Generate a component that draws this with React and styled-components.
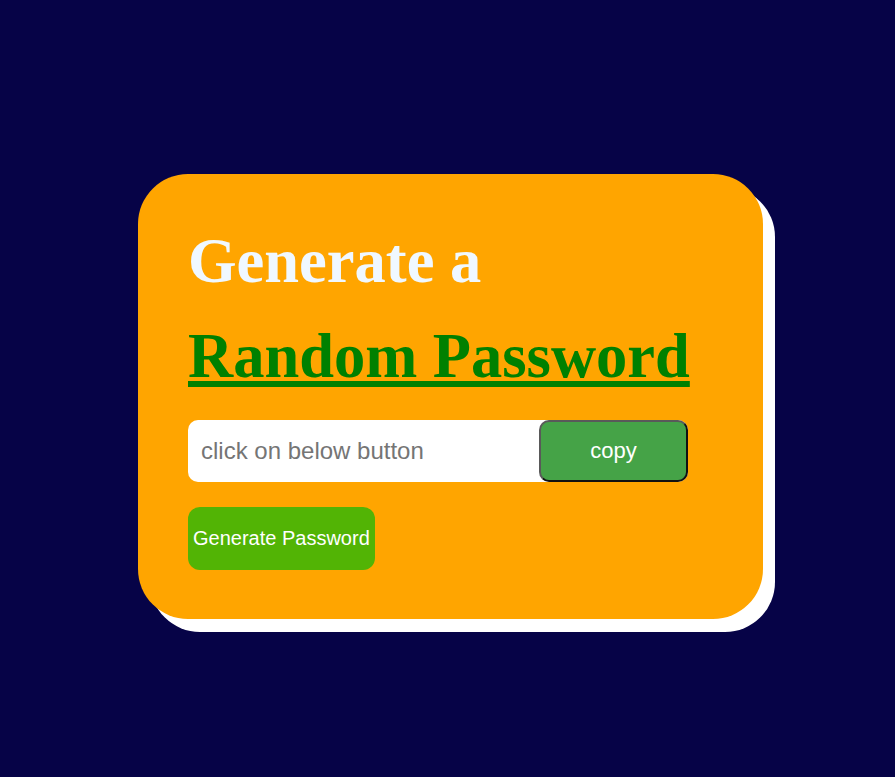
import React from "react";
import styled, { createGlobalStyle } from "styled-components";

const GlobalStyle = createGlobalStyle`
  body {
    margin: 0;
    background: #060347;
  }
`;

const Page = styled.div`
  min-height: 777px;
  box-sizing: border-box;
  display: flex;
  align-items: center;
  justify-content: center;
  padding: 16px 0 0 6px;
`;

const Card = styled.div`
  width: 625px;
  box-sizing: border-box;
  padding: 40px 75px 49px 50px;
  background: orange;
  border-radius: 50px;
  box-shadow: 12px 13px 0 #fff;
`;

const Heading = styled.h1`
  margin: 0 0 16px;
  font-family: "Liberation Serif", "Times New Roman", serif;
  font-size: 62.5px;
  font-weight: bold;
  line-height: 95px;
  color: aliceblue;

  span {
    color: green;
    text-decoration: underline;
    white-space: nowrap;
  }
`;

const InputRow = styled.div`
  display: flex;
  height: 62px;
  margin-bottom: 25px;
  background: #fff;
  border-radius: 10px;
`;

const PasswordInput = styled.input`
  flex: 1;
  min-width: 0;
  border: none;
  outline: none;
  background: transparent;
  padding: 0 0 0 13px;
  font-family: "Liberation Sans", Arial, sans-serif;
  font-size: 24px;

  &::placeholder {
    color: #757575;
  }
`;

const CopyButton = styled.button`
  width: 149px;
  border: 2px solid;
  border-color: #595959 #111 #111 #595959;
  border-radius: 10px;
  background: #45a347;
  color: #fff;
  font-family: "Liberation Sans", Arial, sans-serif;
  font-size: 22px;
  cursor: pointer;
`;

const GenerateButton = styled.button`
  height: 63px;
  padding: 0 5px;
  border: none;
  border-radius: 12px;
  background: #52b405;
  color: #fff;
  font-family: "Liberation Sans", Arial, sans-serif;
  font-size: 20px;
  cursor: pointer;
`;

export default function App() {
  return (
    <>
      <GlobalStyle />
      <Page>
        <Card>
          <Heading>
            Generate a <span>Random Password</span>
          </Heading>
          <InputRow>
            <PasswordInput placeholder="click on below button" readOnly />
            <CopyButton>copy</CopyButton>
          </InputRow>
          <GenerateButton>Generate Password</GenerateButton>
        </Card>
      </Page>
    </>
  );
}
